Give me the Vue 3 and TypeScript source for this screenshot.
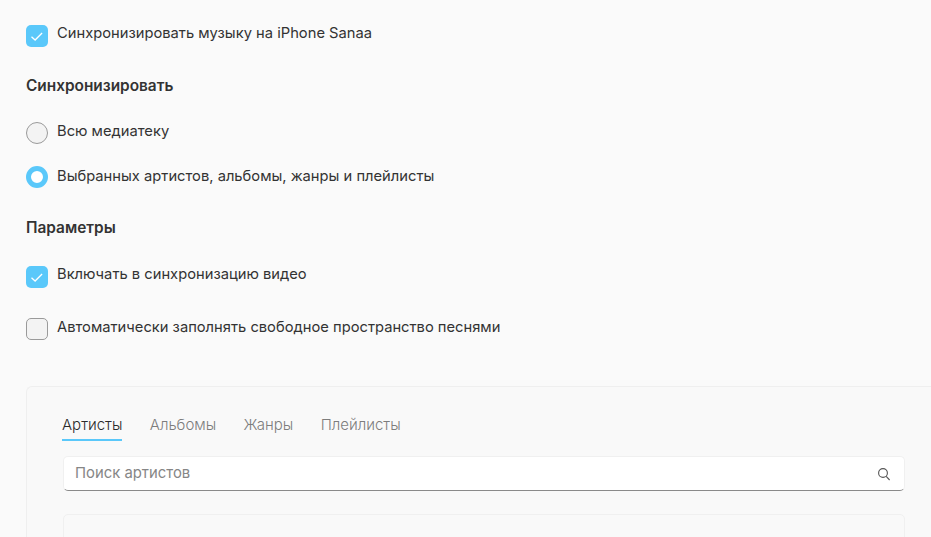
<script setup lang="ts">
const tabs: string[] = ['Артисты', 'Альбомы', 'Жанры', 'Плейлисты']
</script>

<template>
  <main class="page">
    <label class="row first">
      <span class="box on">
        <svg viewBox="0 0 22 22" width="22" height="22"><path d="M5.5 11.8l3.6 3.2 7-7" /></svg>
      </span>
      <span class="text">Синхронизировать музыку на iPhone Sanaa</span>
    </label>

    <h2 class="heading sync">Синхронизировать</h2>
    <label class="row all">
      <span class="radio"></span>
      <span class="text mid">Всю медиатеку</span>
    </label>
    <label class="row selected">
      <span class="radio on"></span>
      <span class="text low">Выбранных артистов, альбомы, жанры и плейлисты</span>
    </label>

    <h2 class="heading params">Параметры</h2>
    <label class="row video">
      <span class="box on">
        <svg viewBox="0 0 22 22" width="22" height="22"><path d="M5.5 11.8l3.6 3.2 7-7" /></svg>
      </span>
      <span class="text">Включать в синхронизацию видео</span>
    </label>
    <label class="row auto">
      <span class="box"></span>
      <span class="text mid">Автоматически заполнять свободное пространство песнями</span>
    </label>

    <section class="panel">
      <nav class="tabs">
        <span v-for="(t, i) in tabs" :key="t" class="tab" :class="{ active: i === 0 }">{{ t }}</span>
      </nav>
      <div class="search">
        <span class="placeholder">Поиск артистов</span>
        <svg viewBox="0 0 14 14" width="14" height="14" class="icon">
          <circle cx="6" cy="6" r="4.4" />
          <path d="M9.2 9.4l3.4 3.6" />
        </svg>
      </div>
      <div class="list"></div>
    </section>
  </main>
</template>

<style>
html, body { margin: 0; background: #fafafa; }
</style>

<style scoped>
.page {
  height: 537px;
  box-sizing: border-box;
  padding: 25px 0 0 26px;
  overflow: hidden;
  background: #fafafa;
  color: #333;
  font-family: Inter, "Noto Sans", sans-serif;
  font-size: 14.72px;
}
.row { display: flex; align-items: flex-start; gap: 9px; }
.text { line-height: 16px; }
.text.low { padding-top: 2px; }
.text.mid { padding-top: 1px; }
.box, .radio {
  flex: none;
  width: 22px;
  height: 22px;
  box-sizing: border-box;
  border: 1px solid #9a9a9a;
  background: #f3f3f3;
}
.box { border-radius: 5px; }
.radio { border-radius: 50%; }
.box.on { border: 0; background: #5ac8fa; }
.box svg { display: block; }
.box path { fill: none; stroke: #fff; stroke-width: 1.3; }
.radio.on { border: 5px solid #5ac8fa; background: #fff; }
.heading { margin: 0; font-size: 15.4px; line-height: 18px; font-weight: 600; color: #333; }
.sync { margin-top: 30px; }
.all { margin-top: 27px; }
.selected { margin-top: 22px; }
.params { margin-top: 31px; }
.video { margin-top: 29px; }
.auto { margin-top: 30px; }
.panel {
  margin-top: 46px;
  height: 200px;
  box-sizing: border-box;
  padding: 28px 26px 0 35px;
  border: 1px solid #efefef;
  border-right: 0;
  border-radius: 6px 0 0 0;
  background: #f9f9f9;
}
.tabs { display: flex; gap: 27.4px; }
.tab {
  padding-bottom: 4px;
  line-height: 20px;
  font-size: 15px;
  color: #7d7d7d;
  border-bottom: 2px solid transparent;
  font-weight: 300;
}
.tab.active { color: #2b2b2b; border-bottom-color: #5ac8fa; }
.search {
  display: flex;
  align-items: center;
  justify-content: space-between;
  height: 35px;
  box-sizing: border-box;
  margin: 15px 0 0 1px;
  padding: 0 13px 1px 11px;
  background: #fff;
  border: 1px solid #f0f0f0;
  border-bottom: 1px solid #8a8a8a;
  border-radius: 5px;
  font-size: 14.85px;
}
.placeholder { color: #868686; }
.icon { position: relative; top: 0.5px; }
.icon circle, .icon path { fill: none; stroke: #555; stroke-width: 1.1; }
.list {
  margin: 23px 0 0 1px;
  height: 60px;
  border: 1px solid #f0f0f0;
  border-radius: 5px;
}
</style>
